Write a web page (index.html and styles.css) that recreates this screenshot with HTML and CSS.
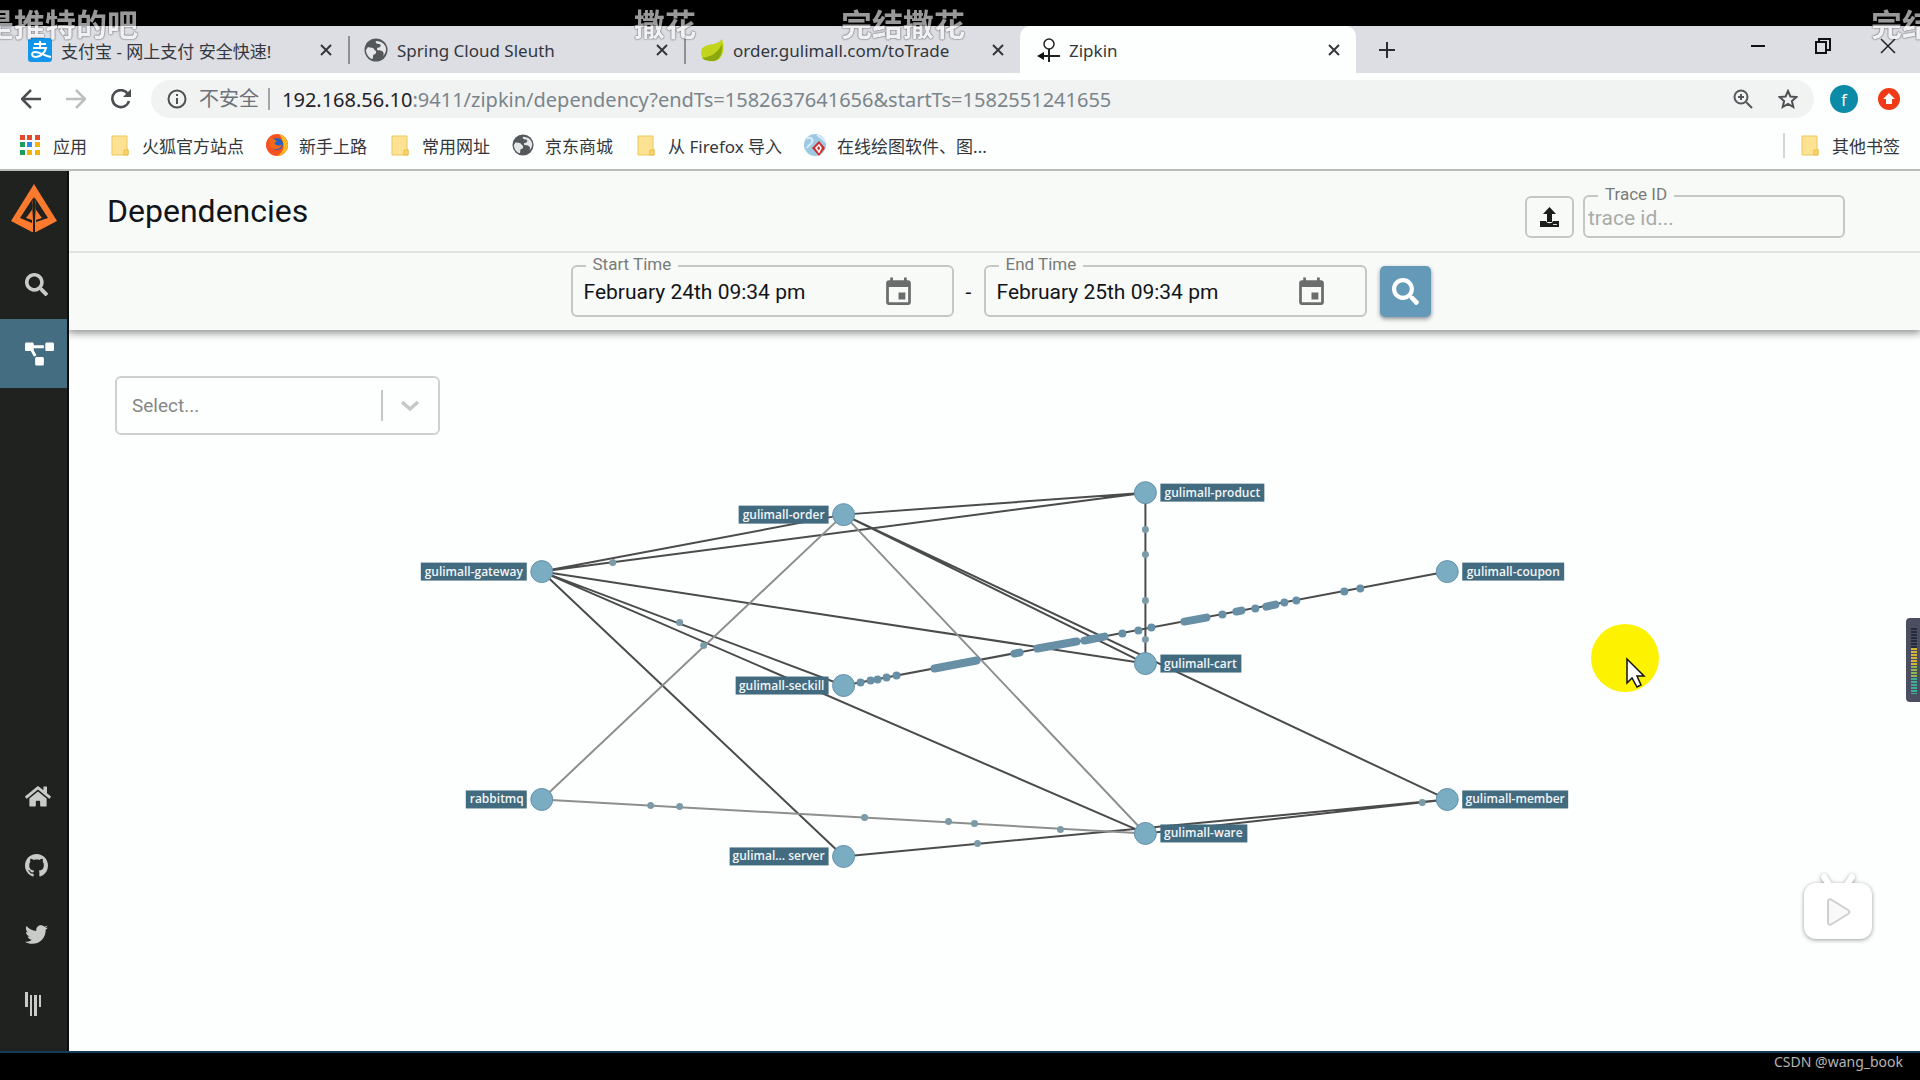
FILE: index.html
```html
<!DOCTYPE html>
<html lang="zh-CN">
<head>
<meta charset="utf-8">
<title>Zipkin</title>
<link rel="stylesheet" href="styles.css">
</head>
<body>
<svg class="defs" aria-hidden="true">
  <symbol id="globe" viewBox="0 0 24 24"><circle cx="12" cy="12" r="11.500" fill="#54585b"/><path d="M4 9c2 1 5 0 6 2s3 2 2 4-3 1-3 3 0 3-1 3c-3-1-6-5-6-9zM12 3c-1 2 1 3 3 3s2 2 1 3-3 0-3 2 3 1 5 2 2 3 1 5c2-2 3-4 3-7 0-4-4-8-10-8z" fill="#e4e6e8"/></symbol>
  <symbol id="folder" viewBox="0 0 18 21"><path d="M1 1h15v13h1v6H1z" fill="#fde293" stroke="#edc75c"/><path d="M13 20v-5h4v5z" fill="#fbd668" stroke="#e7bb4a"/></symbol>
  <symbol id="close" viewBox="0 0 12 12"><path d="M1 1l10 10M11 1L1 11" stroke="#34373b" stroke-width="2" fill="none"/></symbol>
  <symbol id="search" viewBox="0 0 512 512"><path d="M505 442.700L405.300 343c-4.500-4.500-10.600-7-17-7H372c27.600-35.300 44-79.700 44-128C416 93.100 322.900 0 208 0S0 93.100 0 208s93.100 208 208 208c48.300 0 92.700-16.400 128-44v16.300c0 6.400 2.500 12.500 7 17l99.700 99.700c9.400 9.400 24.600 9.400 33.900 0l28.300-28.300c9.400-9.400 9.400-24.600.1-34zM208 336c-70.700 0-128-57.200-128-128 0-70.700 57.200-128 128-128 70.700 0 128 57.200 128 128 0 70.700-57.200 128-128 128z" fill="currentColor"/></symbol>
  <symbol id="event" viewBox="0 0 24 24"><path d="M17 12h-5v5h5v-5zM16 1v2H8V1H6v2H5c-1.110 0-1.990.9-1.990 2L3 19c0 1.100.89 2 2 2h14c1.100 0 2-.9 2-2V5c0-1.100-.9-2-2-2h-1V1h-2zm3 18H5V8h14v11z" fill="#6b6d6c"/></symbol>
</svg>

<div class="screen">
  <div class="browser">
    <div class="tabs">
      <div class="tab">
        <svg class="favicon" viewBox="0 0 24 24"><rect width="24" height="24" rx="3" fill="#1296eb"/><path d="M6 6h12M12 3v7M5 10h13c-1 4-5 9-10 9-5 0-5-5-1-5 5 0 9 4 16 5" fill="none" stroke="#fff" stroke-width="2"/></svg>
        <span class="tab-title">支付宝 - 网上支付 安全快速!</span>
        <button class="icon-btn" aria-label="关闭"><svg class="x"><use href="#close"/></svg></button>
      </div>
      <div class="tab">
        <svg class="favicon"><use href="#globe"/></svg>
        <span class="tab-title">Spring Cloud Sleuth</span>
        <button class="icon-btn" aria-label="关闭"><svg class="x"><use href="#close"/></svg></button>
      </div>
      <div class="tab tab-last">
        <svg class="favicon" viewBox="0 0 24 24"><path d="M1 15C1 7 8 7 14 6c4-1 6-3 8-5 3 8 2 20-7 22-7 1-14-1-14-8z" fill="#c2d51c"/><path d="M2 20c8-1 15-4 20-14 1 9-2 16-8 17-5 0-9 0-12-3z" fill="#8aa90f"/></svg>
        <span class="tab-title">order.gulimall.com/toTrade</span>
        <button class="icon-btn" aria-label="关闭"><svg class="x"><use href="#close"/></svg></button>
      </div>
      <div class="tab tab-active">
        <svg class="favicon" viewBox="0 0 24 24"><path d="M13 11v13M5 18h19" stroke="#222" stroke-width="2"/><circle cx="13" cy="6" r="5" fill="#fff" stroke="#222" stroke-width="1.500"/><path d="M1 18l7-4v8z" fill="#111"/></svg>
        <span class="tab-title">Zipkin</span>
        <button class="icon-btn" aria-label="关闭"><svg class="x"><use href="#close"/></svg></button>
      </div>
      <button class="icon-btn new-tab" aria-label="新标签页"><svg width="18" height="18" viewBox="0 0 18 18"><path d="M9 1v16M1 9h16" stroke="#2c2e31" stroke-width="2"/></svg></button>
      <div class="window-buttons">
        <button class="icon-btn" aria-label="最小化"><svg width="16" height="16"><path d="M1 8h14" stroke="#111" stroke-width="2"/></svg></button>
        <button class="icon-btn" aria-label="还原"><svg width="16" height="16"><path d="M1 4h10v11H1zM4 4V1h11v11h-4" fill="none" stroke="#111" stroke-width="2"/></svg></button>
        <button class="icon-btn" aria-label="关闭窗口"><svg width="16" height="16"><path d="M1 1l14 14M15 1L1 15" stroke="#222" stroke-width="1.500"/></svg></button>
      </div>
    </div>

    <div class="toolbar">
      <div class="nav-buttons">
        <button class="icon-btn" aria-label="后退"><svg width="20" height="20" viewBox="0 0 20 20"><path d="M20 10H2M10 1l-9 9 9 9" fill="none" stroke="#4b4e51" stroke-width="2.500"/></svg></button>
        <button class="icon-btn" aria-label="前进"><svg width="20" height="20" viewBox="0 0 20 20"><path d="M0 10h18M10 1l9 9-9 9" fill="none" stroke="#bcbec0" stroke-width="2.500"/></svg></button>
        <button class="icon-btn" aria-label="重新加载"><svg width="20" height="20" viewBox="0 0 20 20"><path d="M17 5a8.500 8.500 0 1 0 1 7" fill="none" stroke="#4b4e51" stroke-width="2.600"/><path d="M20 0v8h-8z" fill="#4b4e51"/></svg></button>
      </div>
      <div class="omnibox">
        <svg width="20" height="20" viewBox="0 0 20 20"><circle cx="10" cy="10" r="8.500" fill="none" stroke="#4e5154" stroke-width="2"/><path d="M10 9v6M10 5v2" stroke="#4e5154" stroke-width="2"/></svg>
        <span class="insecure">不安全</span>
        <span class="url"><b>192.168.56.10</b>:9411/zipkin/dependency?endTs=1582637641656&amp;startTs=1582551241655</span>
        <svg width="20" height="20" viewBox="0 0 20 20"><path d="M13 13l6 6M8 5v6M5 8h6" stroke="#55585b" stroke-width="2"/><circle cx="8" cy="8" r="6.500" fill="none" stroke="#55585b" stroke-width="2"/></svg>
        <svg width="20" height="20" viewBox="0 0 20 20"><path d="M10 2l2.400 5.500 6 .5-4.500 4 1.400 6L10 15l-5.300 3 1.400-6L1.600 8l6-.5z" fill="none" stroke="#4e5154" stroke-width="2"/></svg>
      </div>
      <span class="avatar">f</span>
      <svg width="22" height="22" viewBox="0 0 22 22"><circle cx="11" cy="11" r="11" fill="#f03a17"/><path d="M11 5l6 6h-3v5H8v-5H5z" fill="#fff"/></svg>
    </div>

    <nav class="bookmarks">
      <a href="#"><svg width="20" height="20" viewBox="0 0 20 20"><path d="M0 0h5v5H0zM7 0h5v5H7zM15 0h5v5h-5z" fill="#e5482f"/><path d="M0 7h5v5H0z" fill="#1f9d58"/><path d="M7 7h5v5H7z" fill="#2f87e8"/><path d="M15 7h5v5h-5zM7 15h5v5H7zM15 15h5v5h-5z" fill="#f3b20c"/><path d="M0 15h5v5H0z" fill="#1f9d58"/></svg>应用</a>
      <a href="#"><svg width="18" height="21"><use href="#folder"/></svg>火狐官方站点</a>
      <a href="#" class="tight"><svg width="22" height="22" viewBox="0 0 22 22"><circle cx="11" cy="11" r="11" fill="#f5501f"/><path d="M13 0c6 2 9 7 9 12-1 6-6 10-11 10 9-5 8-13 2-22z" fill="#ffb81c"/><circle cx="11" cy="10" r="6" fill="#1f62c4"/><path d="M3 4c3 0 6 1 8 4-3 0-3 2-1 3 3 1 5 0 6-1-1 6-9 7-12 2z" fill="#f4681d"/></svg>新手上路</a>
      <a href="#"><svg width="18" height="21"><use href="#folder"/></svg>常用网址</a>
      <a href="#" class="tight"><svg width="22" height="22"><use href="#globe"/></svg>京东商城</a>
      <a href="#"><svg width="18" height="21"><use href="#folder"/></svg>从 Firefox 导入</a>
      <a href="#" class="tight"><svg width="22" height="22" viewBox="0 0 22 22"><circle cx="11" cy="11" r="11" fill="#9ec9e4"/><path d="M3 5c4-3 6 0 5 3s-4 3-5 6M13 1c3 2 6 3 8 7" fill="none" stroke="#d9edf6" stroke-width="2"/><path d="M15 7l6 7-6 8-7-8z" fill="#d02d2c"/><path d="M15 11l2 3-2 4-3-4z" fill="none" stroke="#fff" stroke-width="1.500"/></svg>在线绘图软件、图...</a>
      <a href="#" class="other"><svg width="18" height="21"><use href="#folder"/></svg>其他书签</a>
    </nav>
  </div>

  <div class="app">
    <nav class="sidebar">
      <a href="#" class="logo" aria-label="Zipkin"><svg width="46" height="48" viewBox="0 0 46 48"><path d="M23 0L46 37 25 48V21l-1-2v-4l-1-2-1 2v4l-1 2v27L0 37z" fill="#fb7a2d"/><path d="M22 14L9 34l12 5v-5l-4-1 4-7zM24 14l13 20-12 4v-4l4-1-4-7z" fill="#20211f"/><path d="M22 19v29h-1V26l-6 8 6 2M24 19v29h1V26l6 8-6 2" fill="#fb7a2d"/></svg></a>
      <a href="#" aria-label="Search"><svg width="23" height="23"><use href="#search"/></svg></a>
      <a href="#" class="current" aria-label="Dependencies"><svg width="29" height="24" viewBox="0 0 640 512"><path fill="#fff" d="M384 320H256c-17.670 0-32 14.330-32 32v128c0 17.670 14.330 32 32 32h128c17.670 0 32-14.330 32-32V352c0-17.670-14.330-32-32-32zM192 32c0-17.670-14.330-32-32-32H32C14.330 0 0 14.330 0 32v128c0 17.670 14.330 32 32 32h95.720l73.160 128.040C211.980 300.980 232.400 288 256 288h.28L192 175.510V128h224V64H192V32zM608 0H480c-17.670 0-32 14.330-32 32v128c0 17.670 14.330 32 32 32h128c17.670 0 32-14.330 32-32V32c0-17.670-14.330-32-32-32z"/></svg></a>
      <span class="spacer"></span>
      <a href="#" aria-label="Home"><svg width="26" height="23" viewBox="0 0 576 512"><path fill="currentColor" d="M280.370 148.260L96 300.110V464a16 16 0 0 0 16 16l112.060-.29a16 16 0 0 0 15.920-16V368a16 16 0 0 1 16-16h64a16 16 0 0 1 16 16v95.640a16 16 0 0 0 16 16.050L464 480a16 16 0 0 0 16-16V300L295.670 148.260a12.190 12.190 0 0 0-15.300 0zM571.600 251.470L488 182.560V44.050a12 12 0 0 0-12-12h-56a12 12 0 0 0-12 12v72.610L318.470 43a48 48 0 0 0-61 0L4.340 251.470a12 12 0 0 0-1.600 16.900l25.500 31A12 12 0 0 0 45.150 301l235.220-193.740a12.190 12.190 0 0 1 15.300 0L530.900 301a12 12 0 0 0 16.900-1.600l25.500-31a12 12 0 0 0-1.700-16.930z"/></svg></a>
      <a href="#" aria-label="GitHub"><svg width="23" height="23" viewBox="0 0 16 16"><path fill="currentColor" d="M8 0C3.580 0 0 3.580 0 8c0 3.540 2.290 6.530 5.470 7.590.4.070.55-.17.55-.38 0-.19-.01-.82-.01-1.490-2.010.37-2.530-.49-2.690-.94-.09-.23-.48-.94-.82-1.130-.28-.15-.68-.52-.01-.53.63-.01 1.080.58 1.230.82.72 1.210 1.870.87 2.330.66.07-.52.28-.87.51-1.070-1.780-.2-3.640-.89-3.640-3.950 0-.87.31-1.590.82-2.150-.08-.2-.36-1.020.08-2.120 0 0 .67-.21 2.200.82.64-.18 1.320-.27 2-.27s1.360.09 2 .27c1.530-1.040 2.200-.82 2.200-.82.44 1.100.16 1.920.08 2.120.51.56.82 1.270.82 2.150 0 3.070-1.870 3.750-3.650 3.950.29.25.54.73.54 1.480 0 1.070-.01 1.930-.01 2.200 0 .21.15.46.55.38A8.010 8.010 0 0 0 16 8c0-4.420-3.580-8-8-8z"/></svg></a>
      <a href="#" aria-label="Twitter"><svg width="23" height="23" viewBox="0 0 512 512"><path fill="currentColor" d="M459.370 151.716c.325 4.548.325 9.097.325 13.645 0 138.720-105.583 298.558-298.558 298.558-59.452 0-114.680-17.219-161.137-47.106 8.447.974 16.568 1.299 25.340 1.299 49.055 0 94.213-16.568 130.274-44.832-46.132-.975-84.792-31.188-98.112-72.772 6.498.974 12.995 1.624 19.818 1.624 9.421 0 18.843-1.300 27.614-3.573-48.081-9.747-84.143-51.980-84.143-102.985v-1.299c13.969 7.797 30.214 12.670 47.431 13.319-28.264-18.843-46.781-51.005-46.781-87.391 0-19.492 5.197-37.360 14.294-52.954 51.655 63.675 129.300 105.258 216.365 109.807-1.624-7.797-2.599-15.918-2.599-24.040 0-57.828 46.782-104.934 104.934-104.934 30.213 0 57.502 12.670 76.670 33.137 23.715-4.548 46.456-13.320 66.599-25.340-7.798 24.366-24.366 44.833-46.132 57.827 21.117-2.273 41.584-8.122 60.426-16.243-14.292 20.791-32.161 39.308-52.628 54.253z"/></svg></a>
      <a href="#" aria-label="Gitter"><svg width="18" height="24" viewBox="0 0 18 24"><path fill="currentColor" d="M0 0h3v15H0zM5 3h2v21H5zM9 3h3v21H9zM14 3h2v12h-2z"/></svg></a>
    </nav>

    <main class="main">
      <header class="header">
        <div class="title-row">
          <h1>Dependencies</h1>
          <button class="upload" aria-label="Upload"><svg width="19" height="20" viewBox="0 0 19 20"><path d="M0 14h6c1 3 6 3 7 0h6v6H0z" fill="#1c1d1c"/><path d="M9.500 0L16 7h-4v8H7V7H3z" fill="#1c1d1c"/><path d="M13 17.500h4" stroke="#d5d7d5"/></svg></button>
          <fieldset class="trace">
            <legend><label for="trace">Trace ID</label></legend>
            <input id="trace" type="text" placeholder="trace id...">
          </fieldset>
        </div>
        <div class="time-row">
          <fieldset class="time">
            <legend><label for="start">Start Time</label></legend>
            <div class="time-body"><input id="start" type="text" value="February 24th 09:34 pm"><svg width="33" height="33"><use href="#event"/></svg></div>
          </fieldset>
          <span class="dash">-</span>
          <fieldset class="time">
            <legend><label for="end">End Time</label></legend>
            <div class="time-body"><input id="end" type="text" value="February 25th 09:34 pm"><svg width="33" height="33"><use href="#event"/></svg></div>
          </fieldset>
          <button class="find" aria-label="Search"><svg width="27" height="27"><use href="#search"/></svg></button>
        </div>
      </header>

      <div class="filter">
        <select aria-label="Service"><option>Select...</option></select>
        <span class="divider"></span>
        <svg width="20" height="12" viewBox="0 0 20 12"><path d="M2 2l8 7 8-7" fill="none" stroke="#c6c7c7" stroke-width="3.500"/></svg>
      </div>

      <svg class="graph" viewBox="68 436 1852 615" role="img" aria-label="Dependencies">
        <g class="edges">
          <path d="M541 572L843 515M541 572L1145 493M541 572L1145 664M541 572L843 686M541 572L1145 834M541 572L843 857M843 515L1145 493M843 515L1145 664M843 515L1447 800M843 686L1447 572M1145 493V664M843 857L1447 800M1145 834L1447 800"/>
          <path class="light" d="M843 515L541 800M843 515L1145 834M541 800L1145 834"/>
        </g>
        <g class="flow">
          <path d="M860 683h0M870 681h0M877 680h0M886 678h0M896 676h0M934 669L976 661M1014 654l5-1M1037 649L1076 642M1084 641L1104 637M1122 634h0M1138 631h0M1151 628h0M1184 622L1206 618M1222 615h0M1236 612l5-1M1255 609h0M1266 607l9-2M1284 603h0M1296 601h0M1344 592h0M1360 589h0"/>
        </g>
        <g class="dots">
          <path d="M679 623h0M703 646h0M650 806h0M679 807h0M864 818h0M948 822h0M974 824h0M1060 830h0M977 844h0M1145 530h0M1145 555h0M1145 601h0M1145 640h0M1422 803h0M612 563h0"/>
        </g>
        <g class="nodes">
          <circle cx="541" cy="572" r="11"/><circle cx="541" cy="800" r="11"/><circle cx="843" cy="515" r="11"/><circle cx="843" cy="686" r="11"/><circle cx="843" cy="857" r="11"/><circle cx="1145" cy="493" r="11"/><circle cx="1145" cy="664" r="11"/><circle cx="1145" cy="834" r="11"/><circle cx="1447" cy="572" r="11"/><circle cx="1447" cy="800" r="11"/>
        </g>
        <g class="plates">
          <rect x="420" y="563" width="106" height="18"/><rect x="465" y="791" width="61" height="18"/><rect x="738" y="506" width="90" height="18"/><rect x="735" y="677" width="93" height="18"/><rect x="729" y="848" width="99" height="18"/>
          <rect x="1160" y="484" width="104" height="18"/><rect x="1160" y="655" width="81" height="18"/><rect x="1160" y="825" width="87" height="18"/><rect x="1462" y="563" width="102" height="18"/><rect x="1462" y="791" width="106" height="18"/>
        </g>
        <g class="names">
          <text x="473" y="576">gulimall-gateway</text><text x="496" y="804">rabbitmq</text><text x="783" y="519">gulimall-order</text><text x="781" y="690">gulimall-seckill</text><text x="778" y="861">gulimal... server</text>
          <text x="1212" y="497">gulimall-product</text><text x="1200" y="668">gulimall-cart</text><text x="1203" y="838">gulimall-ware</text><text x="1513" y="576">gulimall-coupon</text><text x="1515" y="804">gulimall-member</text>
        </g>
      </svg>
    </main>
  </div>

  <footer class="watermark">CSDN @wang_book</footer>

  <div class="overlay">
    <span class="danmaku d1">是推特的吧</span>
    <span class="danmaku d2">撒花</span>
    <span class="danmaku d3">完结撒花</span>
    <span class="danmaku d4">完结</span>
    <svg class="pointer" width="68" height="68" viewBox="0 0 68 68"><circle cx="34" cy="34" r="34" fill="#fdf200"/><path d="M36 35v24l5-5 5 9 4-2-4-9h7z" fill="#fff" stroke="#111" stroke-width="1.500"/></svg>
    <svg class="meter" width="14" height="84" viewBox="0 0 14 84"><path d="M14 0H4Q0 0 0 4v76q0 4 4 4h10z" fill="#4b4e5f"/><path d="M8 10v20" stroke="#252a3c" stroke-width="6" stroke-dasharray="2 1"/><path d="M8 30v18" stroke="#d3b53e" stroke-width="6" stroke-dasharray="2 1"/><path d="M8 48v14" stroke="#8db657" stroke-width="6" stroke-dasharray="2 1"/><path d="M8 60v16" stroke="#3fae98" stroke-width="6" stroke-dasharray="2 1"/></svg>
    <svg class="tv" width="76" height="76" viewBox="0 0 76 76"><g fill="#fff"><path d="M24 8l6 9M52 8l-6 9" stroke="#fff" stroke-width="6" stroke-linecap="round"/><rect x="4" y="14" width="68" height="56" rx="12"/></g><path class="play" d="M28 33q0-4 4-2l16 10q3 2 0 4L32 55q-4 2-4-2z"/></svg>
  </div>
</div>
</body>
</html>
```
FILE: styles.css
```css
* { box-sizing: border-box; }
body {
  margin: 0;
  background: #000;
  color: #111418;
  font-family: Roboto, "Noto Sans CJK SC", sans-serif;
}
.defs { position: absolute; width: 0; height: 0; }
svg { flex: none; display: block; }
a { color: inherit; text-decoration: none; }
button, input, select { font: inherit; color: inherit; }
.icon-btn { border: 0; background: none; padding: 0; display: flex; align-items: center; justify-content: center; }

.screen {
  position: relative;
  min-height: 100vh;
  padding-top: 26px;
  display: flex;
  flex-direction: column;
  overflow: hidden;
}

/* Browser frame */
.browser {
  background: #fdfffe;
  border-bottom: 2px solid #b9bcbb;
  color: #33373c;
  font-family: "Noto Sans", "Noto Sans CJK SC", sans-serif;
  font-size: 17px;
}
.tabs { display: flex; height: 47px; padding-left: 12px; background: #dcdee4; }
.tab { width: 336px; display: flex; align-items: center; padding: 1px 16px 0 16px; }
.tab:not(.tab-last):not(.tab-active)::after { content: ""; height: 28px; border-right: 2px solid #8d9095; margin: 0 -18px 0 16px; }
.tab-active { background: #fdfffe; border-radius: 10px 10px 0 0; }
.favicon { width: 24px; height: 24px; margin-right: 9px; }
.tab-title { flex: 1; white-space: nowrap; }
.x { width: 12px; height: 12px; }
.new-tab { width: 62px; }
.window-buttons { margin-left: auto; display: flex; gap: 49px; padding: 0 24px 8px 0; }

.toolbar { display: flex; align-items: center; height: 52px; padding: 0 20px 0 21px; }
.nav-buttons { display: flex; gap: 25px; width: 130px; }
.omnibox {
  flex: 1;
  height: 38px;
  display: flex;
  align-items: center;
  padding: 0 16px;
  border-radius: 19px;
  background: #f1f2f2;
  font-size: 20px;
  color: #6c7278;
}
.omnibox svg + svg { margin-left: 25px; }
.insecure { margin-left: 12px; padding-right: 9px; line-height: 22px; border-right: 2px solid #a3a6a8; }
.url { flex: 1; margin-left: 12px; color: #7a858b; white-space: nowrap; }
.url b { font-weight: 400; color: #1f2327; }
.avatar {
  width: 28px; height: 28px; margin: 0 20px 0 16px;
  display: grid; place-items: center;
  border-radius: 50%; background: #0b8ba8; color: #fff; font-size: 17px;
}

.bookmarks { display: flex; align-items: center; height: 44px; padding: 0 20px 4px; gap: 24px; }
.bookmarks a { display: flex; align-items: center; gap: 13px; white-space: nowrap; }
.bookmarks .tight { gap: 11px; margin-left: -2px; }
.bookmarks .other { margin-left: auto; padding-left: 16px; border-left: 2px solid #d4d6d6; }

/* Zipkin */
.app { flex: 1; display: flex; background: #fdfffe; border-bottom: 2px solid #123c57; }
.sidebar {
  width: 69px;
  display: flex; flex-direction: column;
  padding-bottom: 13px;
  background: #20221f;
  border-right: 2px solid #0d0e0d;
  color: #c9cbc9;
}
.sidebar a { height: 69px; padding-left: 25px; display: flex; align-items: center; }
.sidebar .logo { height: 79px; padding: 0 0 6px 11px; }
.sidebar .current { background: #446d82; }
.spacer { flex: 1; }

.main { flex: 1; min-width: 0; display: flex; flex-direction: column; }
.header { background: #f8faf8; box-shadow: 0 2px 8px 1px #8d8f8e; clip-path: inset(0 0 -16px 0); }
.title-row { display: flex; align-items: center; height: 82px; padding: 0 75px 0 38px; border-bottom: 2px solid #e1e3e1; }
h1 { flex: 1; margin: 0; font-size: 32px; font-weight: 400; line-height: 40px; }
.upload {
  width: 49px; height: 42px; margin: 12px 9px 0 0; padding: 0;
  display: grid; place-items: center;
  border: 2px solid #c5c7c5; border-radius: 6px; background: none;
}
fieldset { margin: 0; padding: 0; min-width: 0; border: 2px solid #c5c7c5; border-radius: 6px; }
legend { margin-left: 13px; padding: 0 7px 4px; font-size: 17px; line-height: 18px; color: #787a79; }
input { display: block; min-width: 0; border: 0; outline: 0; padding: 0; background: none; font-size: 21px; }
.trace { width: 262px; height: 53px; }
.trace input { width: 100%; height: 22px; padding-left: 3px; }
input::placeholder { color: #a9aba9; opacity: 1; }

.time-row { display: flex; align-items: flex-end; justify-content: center; height: 77px; padding: 0 0 13px 12px; }
.time { width: 383px; height: 62px; }
.time-body { display: flex; align-items: center; height: 30px; padding-left: 11px; }
.time input { width: 298px; height: 30px; }
.dash { width: 30px; text-align: center; font-size: 21px; line-height: 50px; }
.find {
  width: 51px; height: 51px; margin-left: 13px; padding: 0;
  display: grid; place-items: center;
  border: 0; border-radius: 5px; background: #649ab7; color: #fff;
  box-shadow: 0 2px 4px #8b9195;
}

.filter {
  width: 325px; height: 59px; margin: 46px 0 0 46px; padding: 0 18px 0 15px;
  display: flex; align-items: center;
  border: 2px solid #cfd1d0; border-radius: 6px;
}
select { flex: 1; appearance: none; border: 0; outline: 0; padding: 0; background: none; font-size: 19px; color: #858786; }
.divider { height: 31px; border-left: 2px solid #c6c8c7; margin-right: 17px; }

.graph { flex: 1 1 auto; width: 100%; min-height: 0; }
.edges path { fill: none; stroke: #4b4b4b; stroke-width: 2; }
.edges .light { stroke: #8e8e8e; }
.flow path { fill: none; stroke: #6790a7; stroke-width: 8; stroke-linecap: round; }
.dots path { fill: none; stroke: #7c9ba8; stroke-width: 7; stroke-linecap: round; }
.nodes circle { fill: #7aadc1; stroke: #6490aa; stroke-width: 1; }
.plates rect { fill: #436b80; }
.names text { fill: #f2f6f8; font: 600 12px "Open Sans", sans-serif; text-anchor: middle; }

.watermark { height: 27px; padding-right: 17px; text-align: right; font: 14px/18px "Noto Sans", sans-serif; color: #b4b4b4; }

/* Things that float over the page */
.overlay { position: absolute; inset: 0; overflow: hidden; pointer-events: none; }
.overlay > * { position: absolute; }
.danmaku {
  top: 4px;
  font: 700 31px/38px "Noto Sans CJK SC", sans-serif;
  white-space: nowrap;
  color: #fff;
  opacity: .6;
  text-shadow: 0 0 2px #000, 0 0 1px #000;
}
.d1 { left: -17px; }
.d2 { left: 634px; }
.d3 { left: 841px; }
.d4 { left: 1871px; }
.pointer { left: 1591px; top: 624px; }
.meter { right: 0; top: 618px; }
.tv { right: 44px; bottom: 135px; filter: drop-shadow(0 1px 2px #999); }
.play { fill: #f8f8f8; stroke: #cfcfcf; stroke-width: 2; }
```
